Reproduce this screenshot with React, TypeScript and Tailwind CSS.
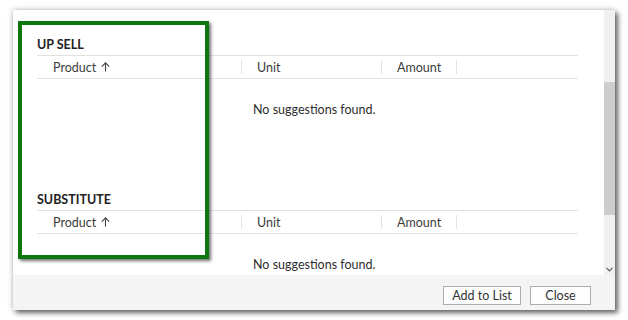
import React from "react";

function Arrow() {
  return (
    <svg width="9" height="10" viewBox="0 0 9 10" className="inline-block ml-[5px] -mt-[2px] align-middle">
      <path d="M4.5 9.5 V1 M0.8 4.6 L4.5 0.9 L8.2 4.6" fill="none" stroke="#444" strokeWidth="1.1" />
    </svg>
  );
}

function Section({ title }: { title: string }) {
  return (
    <div className="flex flex-col h-[155px]">
      <div className="h-[16px] leading-[19px] text-[12.5px] font-bold text-[#222]">{title}</div>
      <div className="mt-[4px] h-[24px] border-y border-[#e1e1e1] flex items-center text-[12.5px] text-[#3c3c3c]">
        <div className="w-[205px] h-full flex items-center justify-between pl-[16px]">
          <span className="flex items-center pt-[2px]">Product<Arrow /></span>
          <span className="w-px h-[14px] bg-[#e3e3e3]" />
        </div>
        <div className="w-[140px] h-full flex items-center justify-between pl-[15px]">
          <span className="pt-[2px]">Unit</span>
          <span className="w-px h-[14px] bg-[#e3e3e3]" />
        </div>
        <div className="w-[75px] h-full flex items-center justify-between pl-[15px]">
          <span className="pt-[2px]">Amount</span>
          <span className="w-px h-[14px] bg-[#e3e3e3]" />
        </div>
      </div>
      <div className="pt-[23px] pl-[216px] text-[12.5px] leading-[16px] text-[#2e2e2e]">No suggestions found.</div>
    </div>
  );
}

export default function App() {
  return (
    <div
      className="w-[628px] h-[320px] bg-white pt-[10px] pl-[13px]"
      style={{ fontFamily: 'Lato, "Noto Sans", sans-serif' }}
    >
      <div className="relative w-[602px] h-[300px] bg-white flex flex-col shadow-[3px_3px_5px_rgba(0,0,0,0.55),0_0_6px_rgba(0,0,0,0.25)]">
        <div className="flex h-[265px] overflow-hidden">
          <div className="flex-1 pt-[25px] pl-[24px] pr-[26px]">
            <Section title="UP SELL" />
            <Section title="SUBSTITUTE" />
          </div>
          <div className="w-[11px] h-full bg-[#f0f0f0] flex flex-col">
            <div className="h-[72px]" />
            <div className="h-[133px] bg-[#cdcdcd]" />
            <div className="flex-1 flex items-end justify-center pb-[3px]">
              <svg width="7" height="5" viewBox="0 0 7 5">
                <path d="M0.5 0.8 L3.5 3.8 L6.5 0.8" fill="none" stroke="#606060" strokeWidth="1.2" />
              </svg>
            </div>
          </div>
        </div>
        <div className="flex-1 bg-[#f4f4f4] flex justify-end items-start pt-[11px] pr-[24px] gap-[9px]">
          <button className="w-[78px] h-[19px] border border-[#adadad] bg-[#fdfdfd] text-[12.5px] leading-[17px] text-[#333]">Add to List</button>
          <button className="w-[61px] h-[19px] border border-[#adadad] bg-[#fdfdfd] text-[12.5px] leading-[17px] text-[#333]">Close</button>
        </div>
        <div className="absolute left-[5px] top-[11px] w-[191px] h-[238px] border-4 border-[#0d760d] shadow-[2px_2px_3px_rgba(0,0,0,0.55)]" />
      </div>
    </div>
  );
}
